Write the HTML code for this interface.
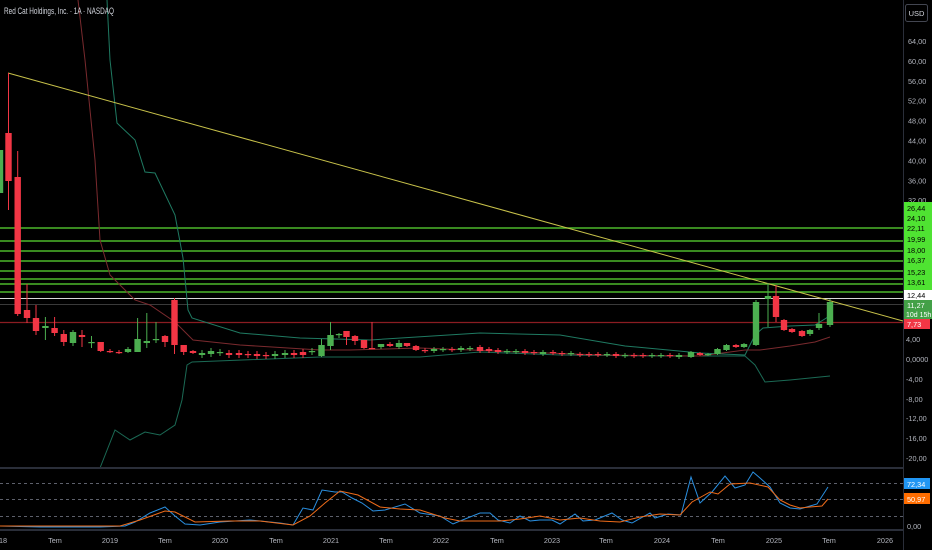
<!DOCTYPE html>
<html><head><meta charset="utf-8">
<style>
html,body{margin:0;padding:0;background:#000;width:932px;height:550px;overflow:hidden;font-family:"Liberation Sans",sans-serif;}
svg{position:absolute;left:0;top:0}
.t{font-family:"Liberation Sans",sans-serif;font-size:7.3px;fill:#b2b5be}
</style></head><body>
<svg id="s" width="932" height="550" xmlns="http://www.w3.org/2000/svg">
<rect width="932" height="550" fill="#000"/>
<g id="hl"></g>
<g id="bands" fill="none" stroke-width="1"></g>
<line x1="8" y1="73" x2="903" y2="321" stroke="#c8c24a" stroke-width="1"/>
<g id="candles"></g>
<g id="rsi" fill="none" stroke-width="1"></g>
<line x1="0" y1="468" x2="903" y2="468" stroke="#2a2e39" stroke-width="2"/>
<line x1="0" y1="530" x2="903" y2="530" stroke="#2a2e39" stroke-width="2"/>
<line x1="903.5" y1="0" x2="903.5" y2="550" stroke="#2a2e39"/>
<g id="axis"></g>
<text x="4" y="14" textLength="110" lengthAdjust="spacingAndGlyphs" style="font-family:'Liberation Sans',sans-serif;font-size:9px;fill:#d1d4dc">Red Cat Holdings, Inc. · 1A · NASDAQ</text>
<rect x="905.5" y="4.5" width="22" height="17" rx="2" fill="#000" stroke="#434651"/>
<text x="916.5" y="16" text-anchor="middle" style="font-size:7.5px;fill:#d1d4dc;font-family:'Liberation Sans',sans-serif">USD</text>
</svg>
<script>
var NS="http://www.w3.org/2000/svg";
function el(p,tag,a,txt){var e=document.createElementNS(NS,tag);for(var k in a)e.setAttribute(k,a[k]);if(txt!=null)e.textContent=txt;document.getElementById(p).appendChild(e);return e;}
[228,241,251,261,271,279,284,292].forEach(function(y){el('hl','line',{x1:0,x2:903,y1:y,y2:y,stroke:'#4cb82a','stroke-width':1.6});});
el('hl','line',{x1:0,x2:903,y1:298.5,y2:298.5,stroke:'#d8d8d8','stroke-width':1});
el('hl','line',{x1:0,x2:903,y1:304.5,y2:304.5,stroke:'#3a3a3a','stroke-width':1});
el('hl','line',{x1:0,x2:903,y1:322.5,y2:322.5,stroke:'#8b1c22','stroke-width':1.2});
function pl(g,pts,c){el(g,'polyline',{points:pts.map(function(p){return p.join(',')}).join(' '),stroke:c});}
pl('bands',[[107,0],[110,60],[117,123],[135,140],[145,172],[155,173],[175,215],[183,258],[188,310],[192,318],[240,333],[300,338],[370,340],[480,333],[560,335],[625,346],[700,353],[745,355],[755,335],[763,328],[790,326],[815,325],[828,317]],'#1f7a62');
pl('bands',[[100,468],[115,430],[130,440],[145,432],[160,435],[175,425],[182,400],[187,365],[192,362],[320,357],[420,357],[480,352],[560,355],[660,356],[745,356],[755,365],[765,382],[790,380],[830,376]],'#1b6a55');
pl('bands',[[78,0],[85,60],[95,160],[100,240],[110,275],[120,285],[135,300],[150,305],[175,322],[193,340],[240,345],[320,350],[350,350],[420,348],[520,352],[600,355],[700,356],[745,350],[760,350],[790,346],[815,342],[830,337]],'#7a2a2e');
var G='#4caf50',R='#f23645';
var c=[[0,150,193,150,193,1],[8.5,133,181,73,210,0],[17.7,177,314,151,316,0],[27,310,318,284,323,0],[36,318,331,305,335,0],[45.4,326,328,317,340,1],[54.6,328,333,317,336,0],[63.8,334,342,330,346,0],[73,332,343,330,346,1],[82,335,337,330,347,0],[91.5,342,343,336,348,1],[100.7,342,351,342,352,0],[110,351,352,349,353,0],[119,352,353,350,354,0],[128,349,352,347,353,1],[137.6,339,352,318,352,1],[146.8,341,343,313,348,1],[156,339,340,322,343,1],[165,336,342,335,347,0],[174.5,300,345,298,354,0],[183.7,345,352,345,355,0],[193,351,353,350,354,0]];
var small=[[202,353,355,1],[211,351,354,1],[220,352,353,1],[229,353,355,0],[239,353,355,0],[248,354,355,0],[257,354,356,0],[266,355,356,0],[275,354,356,1],[285,353,355,1],[294,353,355,0],[303,352,355,0],[312,351,352,1]];
small.forEach(function(s){c.push([s[0],s[1],s[2],s[1]-3,s[2]+3,s[3]]);});
c=c.concat([[321.5,345,356,339,357,1],[330.5,335,346,322,350,1],[339,334,335,333,338,1],[346.5,331,337,331,345,0],[355,336,341,335,345,0],[364,340,348,340,349,0],[372,348,349,322,349,0],[381,344,347,344,349,1],[390,344,346,342,347,0],[399,343,347,340,349,1],[407,343,346,343,347,0],[416,346,350,345,351,0]]);
var mid=[[425,350,351,0],[434,349,351,1],[443,349,350,1],[452,349,350,0],[461,348,350,1],[470,348,349,1],[480,347,351,0],[489,349,351,0],[498,350,352,0],[507,351,352,1],[516,351,352,1],[525,351,353,0],[534,352,353,0],[543,352,354,1],[553,352,353,0],[562,353,354,0],[571,353,354,1],[580,354,355,0],[589,354,355,0],[598,354,355,0],[607,354,355,1],[616,354,356,0],[625,355,356,1],[634,355,356,0],[643,355,356,0],[652,355,356,1],[661,355,356,1],[670,355,356,0],[679,355,357,1]];
mid.forEach(function(s){c.push([s[0],s[1],s[2],s[1]-2,s[2]+2,s[3]]);});
c=c.concat([[691,352,357,351,358,1],[700,353,355,352,356,0],[708,354,355,353,356,1],[717.5,349,354,348,355,1],[726.5,345,350,344,351,1],[736,345,347,344,348,0],[744,344,347,343,348,1],[756,302,345,300,346,1],[768,296,299,283,327,1],[776,296,317,285,322,0],[784,320,330,319,331,0],[792,329,332,328,333,0],[802,331,336,330,337,0],[810,330,334,329,336,1],[819,324,328,313,330,1],[830,302,325,299,327,1]]);
c.forEach(function(k){var col=k[5]?G:R;el('candles','line',{x1:k[0],x2:k[0],y1:k[3],y2:k[4],stroke:col,'stroke-width':1});el('candles','rect',{x:k[0]-3.2,y:k[1],width:6.4,height:Math.max(1.2,k[2]-k[1]),fill:col});});
[483,499,516].forEach(function(y){el('rsi','line',{x1:0,x2:903,y1:y+.5,y2:y+.5,stroke:'#5d606b','stroke-dasharray':'3,3'});});
pl('rsi',[[0,526],[40,527],[100,527],[125,526],[135,522],[150,513],[165,507],[175,516],[185,524],[200,525],[220,522],[250,520],[280,523],[293,525],[303,508],[313,510],[322,490],[335,492],[342,492],[352,498],[362,503],[373,511],[385,510],[405,504],[420,513],[440,516],[453,524],[460,521],[480,513],[490,513],[498,520],[510,523],[520,516],[530,521],[540,520],[552,520],[560,524],[575,514],[583,521],[595,520],[612,513],[622,520],[632,523],[650,513],[655,518],[668,514],[681,515],[691,477],[700,503],[712,492],[725,476],[735,488],[745,485],[753,472],[760,478],[770,487],[780,503],[790,508],[800,509],[810,506],[817,504],[828,487]],'#2a8fe0');
pl('rsi',[[0,526],[120,526],[140,520],[165,511],[175,512],[195,522],[230,521],[260,521],[293,525],[310,516],[325,503],[340,491],[358,495],[380,507],[400,509],[420,510],[445,518],[460,521],[500,521],[520,519],[540,516],[560,520],[580,518],[600,521],[620,522],[640,517],[660,514],[680,515],[692,502],[710,492],[718,494],[730,484],[750,483],[768,487],[780,500],[790,505],[800,508],[810,507],[822,506],[828,499]],'#ef6c1a');
for(var i=0;i<9;i++){el('axis','text',{x:908,y:44+i*19.9,class:'t'},(64-4*i)+',00');}
[['4,00',342],['0,0000',362],['-4,00',382],['-8,00',402],['-12,00',421],['-16,00',441],['-20,00',461]].forEach(function(a){el('axis','text',{x:906,y:a[1],class:'t'},a[0]);});
el('axis','rect',{x:904,y:202,width:28,height:88,fill:'#4fe332'});
[['26,44',211],['24,10',221],['22,11',231],['19,99',242],['18,00',253],['16,37',263],['15,23',275],['13,61',285]].forEach(function(a){el('axis','text',{x:907,y:a[1],class:'t',style:'fill:#000'},a[0]);});
el('axis','rect',{x:904,y:290,width:28,height:10,fill:'#fff'});
el('axis','text',{x:907,y:298,class:'t',style:'fill:#000'},'12,44');
el('axis','rect',{x:904,y:300,width:28,height:19,fill:'#43a047'});
el('axis','text',{x:907,y:308,class:'t',style:'fill:#fff'},'11,27');
el('axis','text',{x:906,y:317,class:'t',style:'fill:#fff;font-size:7px'},'10d 15h');
el('axis','rect',{x:904,y:319,width:26,height:10,fill:'#f23645'});
el('axis','text',{x:907,y:327,class:'t',style:'fill:#fff'},'7,73');
el('axis','rect',{x:904,y:478,width:26,height:11,fill:'#2196f3'});
el('axis','text',{x:907,y:487,class:'t',style:'fill:#fff'},'72,34');
el('axis','rect',{x:904,y:493,width:26,height:11,fill:'#ff6d00'});
el('axis','text',{x:907,y:502,class:'t',style:'fill:#fff'},'50,97');
el('axis','text',{x:907,y:529,class:'t'},'0,00');
[['18',3],['Tem',55],['2019',110],['Tem',165],['2020',220],['Tem',276],['2021',331],['Tem',386],['2022',441],['Tem',497],['2023',552],['Tem',606],['2024',662],['Tem',718],['2025',774],['Tem',829],['2026',885]].forEach(function(a){el('axis','text',{x:a[1],y:543,class:'t','text-anchor':'middle'},a[0]);});
</script>
</body></html>
